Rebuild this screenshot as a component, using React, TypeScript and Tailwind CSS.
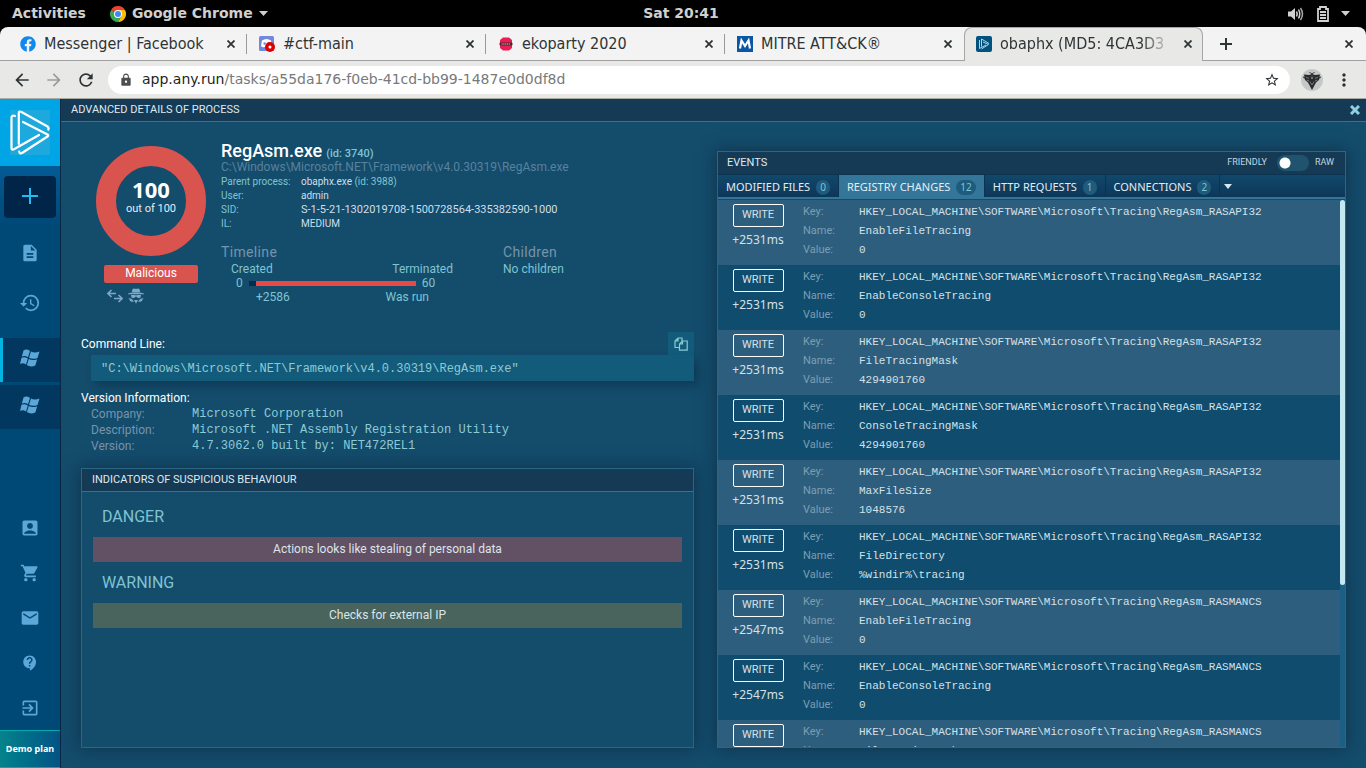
import { ReactNode } from "react";
import {
  MdDescription,
  MdHistory,
  MdAccountBox,
  MdShoppingCart,
  MdEmail,
  MdContactSupport,
  MdExitToApp,
  MdArrowBack,
  MdArrowForward,
  MdRefresh,
  MdLock,
  MdStarBorder,
  MdMoreVert,
} from "react-icons/md";
import { FaFacebook } from "react-icons/fa";

const RASAPI = "HKEY_LOCAL_MACHINE\\SOFTWARE\\Microsoft\\Tracing\\RegAsm_RASAPI32";
const RASMAN = "HKEY_LOCAL_MACHINE\\SOFTWARE\\Microsoft\\Tracing\\RegAsm_RASMANCS";

const events = [
  { time: "+2531ms", key: RASAPI, name: "EnableFileTracing", value: "0" },
  { time: "+2531ms", key: RASAPI, name: "EnableConsoleTracing", value: "0" },
  { time: "+2531ms", key: RASAPI, name: "FileTracingMask", value: "4294901760" },
  { time: "+2531ms", key: RASAPI, name: "ConsoleTracingMask", value: "4294901760" },
  { time: "+2531ms", key: RASAPI, name: "MaxFileSize", value: "1048576" },
  { time: "+2531ms", key: RASAPI, name: "FileDirectory", value: "%windir%\\tracing" },
  { time: "+2547ms", key: RASMAN, name: "EnableFileTracing", value: "0" },
  { time: "+2547ms", key: RASMAN, name: "EnableConsoleTracing", value: "0" },
  { time: "+2547ms", key: RASMAN, name: "FileTracingMask", value: "4294901760" },
];

function ChromeLogo() {
  return (
    <svg className="size-4" viewBox="0 0 48 48" aria-hidden="true">
      <path d="M24 24 3.2 12A24 24 0 0 1 44.8 12Z" fill="#ea4335" />
      <path d="M24 24 3.2 12A24 24 0 0 0 24 48L34.4 30Z" fill="#34a853" />
      <path d="M24 24 34.4 30 24 48A24 24 0 0 0 44.8 12H24Z" fill="#fbbc05" />
      <circle cx="24" cy="24" r="12" fill="#fff" />
      <circle cx="24" cy="24" r="9" fill="#4285f4" />
    </svg>
  );
}

function DiscordLogo() {
  return (
    <svg className="size-4" viewBox="0 0 16 16" aria-hidden="true">
      <rect width="15" height="15" rx="1.5" fill="#7289da" />
      <path d="M3 4.5Q7.500 1.500 12 4.500L13 10Q11 12 9.500 11L5.500 11Q4 12 2 10Z" fill="#fff" />
      <circle cx="5.600" cy="7.500" r="1.200" fill="#7289da" />
      <circle cx="9.400" cy="7.500" r="1.200" fill="#7289da" />
      <circle cx="11" cy="11" r="5" fill="#dc0000" />
      <circle cx="11" cy="11" r="1.500" fill="#fff" />
    </svg>
  );
}

function EkoLogo() {
  return (
    <svg className="size-4" viewBox="0 0 16 16" aria-hidden="true">
      <path d="M5 1.500H11L14 4V12L11 14.500H5L2 12V4Z" fill="#ec1c54" />
      <rect x="1.500" y="6.500" width="13" height="3" rx="1" fill="#4b2733" />
      <path d="M3.500 8H12.500" stroke="#e6b8c4" strokeDasharray="1.200 .6" />
    </svg>
  );
}

function MitreLogo() {
  return (
    <svg className="size-4" viewBox="0 0 16 16" aria-hidden="true">
      <rect width="16" height="16" fill="#0a57a4" />
      <path d="M3 12.500 4.500 4.500 8 10 11.500 4.500 13 12.500" fill="none" stroke="#fff" strokeWidth="2.200" />
    </svg>
  );
}

function RunGlyph({ className }: { className: string }) {
  return (
    <svg className={className} viewBox="0 0 40 45" fill="none" stroke="#fff" strokeWidth="2.2" strokeLinecap="round" strokeLinejoin="round" aria-hidden="true">
      <path d="M5 6Q1.500 4.800 1.500 8V38Q1.500 40.500 4 39.300L29 25" />
      <path d="M8.800 34V3Q8.800 .6 11.500 2L37.500 16.500Q39.200 17.500 38.300 19.500" />
      <path d="M13 12 37.500 24.500Q39 25.500 37.500 26.500L12 43Q9.500 44.200 9.200 41.500" />
    </svg>
  );
}

function RunFavicon() {
  return (
    <span className="flex size-4 shrink-0 items-center justify-center rounded-xs bg-[#02527f]">
      <svg className="h-3 w-3" viewBox="0 0 12 12" fill="none" stroke="#bfe3f2" aria-hidden="true">
        <path d="M1.500 2V10.500L8 7M3.500 1 11 5.500M3.500 1V8.500M5 4 10.500 6.500 3.500 11" strokeWidth=".9" />
      </svg>
    </span>
  );
}

function Avatar() {
  return (
    <svg className="size-[22px]" viewBox="0 0 22 22" aria-hidden="true">
      <circle cx="11" cy="11" r="11" fill="#c6c8c8" />
      <path d="M8.500 3Q11 6.500 13.500 3" fill="none" stroke="#333" />
      <path d="M3 5.500 8 6 11 5 14 6 19 5.500 18 11 15 13.500 11 21 7 13.500 4 11Z" fill="#292b2c" />
      <path d="M2 8Q4 8 5 11M20 8Q18 8 17 11" fill="none" stroke="#292b2c" />
      <path d="M5 8 8 9.500M17 8 14 9.500M9 12.500 11 16 13 12.500M5.500 11 8 12M16.500 11 14 12M10 7.500 11 10 12 7.500" fill="none" stroke="#9a9d9e" strokeWidth=".7" />
    </svg>
  );
}

function Cross() {
  return (
    <svg className="size-2" viewBox="0 0 8 8" stroke="currentColor" strokeWidth="1.8" aria-hidden="true">
      <path d="M.5 .5 7.500 7.500M7.500 .5 .5 7.500" />
    </svg>
  );
}

function Tab({ icon, title, active = false, divider = false }: { icon: ReactNode; title: string; active?: boolean; divider?: boolean }) {
  return (
    <div
      className={
        active
          ? "flex w-[239px] items-center rounded-t-lg border border-b-0 border-[#a5a5a5] bg-[#e8e8e7] pb-px pl-[11px] pr-[6px]"
          : "flex w-[239px] items-center border-b border-[#a0a0a0] pl-3"
      }
    >
      <span className="shrink-0">{icon}</span>
      <span
        className={
          active
            ? "ml-2 flex-1 overflow-hidden whitespace-nowrap [mask-image:linear-gradient(to_right,black_82%,transparent)]"
            : "ml-2 flex-1 overflow-hidden whitespace-nowrap"
        }
      >
        {title}
      </span>
      <button className="ml-2 flex size-4 items-center justify-center" aria-label={"Close " + title}>
        <Cross />
      </button>
      {!active && <span className={divider ? "ml-[7px] h-5 w-px bg-[#999]" : "ml-[7px] h-5 w-px"} />}
    </div>
  );
}

function SideButton({ label, children }: { label: string; children: ReactNode }) {
  return (
    <button aria-label={label} className="flex h-[45px] w-full items-center justify-center text-[#5ba7d7]">
      {children}
    </button>
  );
}

function EventTab({ label, count, active = false }: { label: string; count: number; active?: boolean }) {
  return (
    <button
      role="tab"
      aria-selected={active}
      className={
        active
          ? "flex items-center gap-[6px] whitespace-nowrap border-r border-[#0c3450] bg-[#347699] px-2 pt-[2px]"
          : "flex items-center gap-[6px] whitespace-nowrap border-r border-[#0c3450] px-2 pt-[2px]"
      }
    >
      {label}
      <span className="rounded-full bg-[#1e5b7c] px-1 text-[10px] leading-[15px] text-[#7fc4d6]">{count}</span>
    </button>
  );
}

function Fact({ label, children }: { label: string; children: ReactNode }) {
  return (
    <div className="flex">
      <dt className="w-20 text-[#7fc4d0]">{label}</dt>
      <dd className="text-[#cfdfe8]">{children}</dd>
    </div>
  );
}

function Version({ label, children }: { label: string; children: ReactNode }) {
  return (
    <div className="flex h-4 items-center">
      <dt className="w-[101px] font-[Roboto,sans-serif] text-[#7694aa]">{label}</dt>
      <dd className="font-['Liberation_Mono',monospace] text-[#8ccbd5]">{children}</dd>
    </div>
  );
}

export default function App() {
  return (
    <div className="flex h-screen min-h-0 flex-col overflow-hidden bg-black font-[Roboto,sans-serif]">
      <header className="grid h-[27px] shrink-0 grid-cols-[1fr_auto_1fr] items-center pl-3 pr-4 font-['DejaVu_Sans',sans-serif] text-[14px] font-bold text-[#d0d0d0]">
        <div className="flex items-center gap-6">
          <button>Activities</button>
          <button className="flex items-center gap-[6px]">
            <ChromeLogo />
            Google Chrome
            <svg className="h-[5px] w-[9px]" viewBox="0 0 9 5" aria-hidden="true">
              <path d="M0 0H9L4.500 5Z" fill="currentColor" />
            </svg>
          </button>
        </div>
        <time>Sat 20:41</time>
        <div className="flex items-center justify-end gap-3">
          <svg className="h-4 w-[18px]" viewBox="0 0 18 16" fill="none" stroke="currentColor" aria-hidden="true">
            <path d="M1 5.500H4L8 2V14L4 10.500H1Z" fill="currentColor" stroke="none" />
            <path d="M9.500 5.500Q11 8 9.500 10.500" strokeWidth="1.500" />
            <path d="M11.500 3.500Q14 8 11.500 12.500" strokeWidth="1.500" />
            <path d="M13.500 2Q17.500 8 13.500 14" strokeWidth="1.500" opacity=".8" />
          </svg>
          <svg className="h-4 w-3" viewBox="0 0 12 16" fill="none" stroke="currentColor" strokeWidth="1.800" aria-hidden="true">
            <path d="M1 3H3V1H9V3H11V15H1ZM3 6H9M3 9H9M3 12H9" />
          </svg>
          <svg className="h-[5px] w-[9px]" viewBox="0 0 9 5" aria-hidden="true">
            <path d="M0 0H9L4.500 5Z" fill="currentColor" />
          </svg>
        </div>
      </header>

      <nav aria-label="Browser tabs" className="flex h-[34px] shrink-0 rounded-t-lg bg-[#f3f3f3] font-['DejaVu_Sans_Condensed','Noto_Sans',sans-serif] text-[16px] leading-5 text-[#2e3436]">
        <div className="w-2 border-b border-[#a0a0a0]" />
        <Tab icon={<FaFacebook className="size-4 text-[#1089ef]" />} title="Messenger | Facebook" divider />
        <Tab icon={<DiscordLogo />} title="#ctf-main" divider />
        <Tab icon={<EkoLogo />} title="ekoparty 2020" divider />
        <Tab icon={<MitreLogo />} title="MITRE ATT&CK®" />
        <Tab icon={<RunFavicon />} title="obaphx (MD5: 4CA3D3" active />
        <div className="flex flex-1 items-center justify-between border-b border-[#a0a0a0] pl-[17px] pr-[13px]">
          <button aria-label="New tab">
            <svg className="size-3" viewBox="0 0 12 12" stroke="currentColor" strokeWidth="2" aria-hidden="true"><path d="M6 0V12M0 6H12" /></svg>
          </button>
          <button aria-label="Close window">
            <Cross />
          </button>
        </div>
      </nav>

      <div className="flex h-[38px] shrink-0 items-center border-b border-[#a8aaa2] bg-[#e8e8e7] px-3 text-[#2e3436]">
        <button aria-label="Back"><MdArrowBack className="size-5" /></button>
        <button aria-label="Forward" className="ml-3 text-[#9a9c9c]"><MdArrowForward className="size-5" /></button>
        <button aria-label="Reload" className="ml-3"><MdRefresh className="size-5" /></button>
        <div className="ml-3 flex h-7 flex-1 items-center rounded-full bg-white pl-[11px] pr-[10px]">
          <MdLock className="size-[14px] text-[#4c4f50]" />
          <div className="ml-[9px] flex-1 font-['DejaVu_Sans',sans-serif] text-[14px] text-[#77797a]">
            <a href="#address" className="whitespace-nowrap"><span className="text-[#1c1f20]">app.any.run</span>/tasks/a55da176-f0eb-41cd-bb99-1487e0d0df8d</a>
          </div>
          <button aria-label="Bookmark this page"><MdStarBorder className="size-4" /></button>
        </div>
        <button aria-label="Profile" className="ml-[11px]"><Avatar /></button>
        <button aria-label="Menu" className="ml-[11px]"><MdMoreVert className="size-5" /></button>
      </div>

      <div className="flex min-h-0 flex-1 bg-[#144c6c]">
        <aside className="flex w-[61px] shrink-0 flex-col border-r border-[#0a2844] bg-[#004876]">
          <a href="#home" aria-label="ANY.RUN home" className="flex h-[67px] shrink-0 items-center justify-center bg-[#00a5e6]">
            <span className="bg-[#1ea9de]"><RunGlyph className="h-[45px] w-10" /></span>
          </a>
          <div className="h-[62px] shrink-0 bg-linear-to-b from-[#035b94] to-[#004876] px-1 pt-[10px]">
            <button aria-label="New task" className="flex h-[42px] w-full items-center justify-center rounded bg-[#012548] pb-[2px] text-[#20bdf5]">
              <svg className="size-4" viewBox="0 0 16 16" stroke="currentColor" strokeWidth="2" aria-hidden="true"><path d="M8 0V16M0 8H16" /></svg>
            </button>
          </div>
          <button aria-label="Reports" className="flex h-[50px] shrink-0 items-center justify-center text-[#5ba7d7]"><MdDescription className="size-5" /></button>
          <button aria-label="History" className="flex h-[50px] shrink-0 items-center justify-center text-[#5ba7d7]"><MdHistory className="size-[22px]" /></button>
          <button aria-label="Windows task 1" className="mt-[10px] flex h-11 shrink-0 items-center justify-center border-l-3 border-[#00b5e2] bg-[#02375f] pb-1 pr-[3px] text-[#5ba7d7]">
            <WindowsFlag />
          </button>
          <button aria-label="Windows task 2" className="mt-[3px] flex h-11 shrink-0 items-center justify-center bg-[#02375f] pb-1 text-[#5ba7d7]">
            <WindowsFlag />
          </button>
          <div className="mt-auto shrink-0">
            <SideButton label="Profile page"><MdAccountBox className="size-5" /></SideButton>
            <SideButton label="Pricing"><MdShoppingCart className="size-5" /></SideButton>
            <SideButton label="Contacts"><MdEmail className="size-5" /></SideButton>
            <SideButton label="Help"><MdContactSupport className="size-[18px]" /></SideButton>
            <SideButton label="Sign out"><MdExitToApp className="size-5" /></SideButton>
            <a href="#plan" className="flex h-[38px] items-center justify-center border-y border-[#03a9ad] bg-linear-to-r from-[#05838c] to-[#045384] font-['Noto_Sans',sans-serif] text-[9px] font-bold text-white">
              Demo plan
            </a>
          </div>
        </aside>

        <div className="flex min-w-0 flex-1 flex-col">
          <div className="flex h-[23px] shrink-0 items-center justify-between border-b border-[#2a7699] bg-[#143a56] pl-[10px] pr-[6px] text-[11px] text-[#dfe9ef]">
            <h1>ADVANCED DETAILS OF PROCESS</h1>
            <button aria-label="Close details" className="text-[#8fd0e0]">
              <svg className="size-[10px]" viewBox="0 0 10 10" stroke="currentColor" strokeWidth="3" aria-hidden="true"><path d="M1 1 9 9M9 1 1 9" /></svg>
            </button>
          </div>

          <main className="flex min-h-0 flex-1 gap-[23px] px-5 pb-5">
            <section className="flex min-w-0 flex-1 flex-col">
              <div className="flex pl-[15px] pt-[18px]">
                <div className="flex w-[110px] flex-col items-center pt-[6px]">
                  <div className="flex size-[110px] flex-col items-center justify-center rounded-full border-[20px] border-[#d9534f] pb-1">
                    <strong className="font-['Noto_Sans',sans-serif] text-[22px] leading-5 text-white">100</strong>
                    <span className="text-[11px] leading-5 text-[#e5edf2]">out of 100</span>
                  </div>
                  <div className="mt-[9px] flex h-[18px] w-[94px] items-center justify-center rounded-xs bg-[#d9534f] pb-[2px] text-[12px] text-white">Malicious</div>
                  <div className="mt-[5px] flex w-[88px] items-center gap-[5px] text-[#7fa8c4]">
                    <svg className="h-[14px] w-4" viewBox="0 0 16 14" fill="none" stroke="currentColor" strokeWidth="1.600" aria-hidden="true">
                      <path d="M4.500 1 1 4.500 4.500 8M1 4.500H9M11.500 6 15 9.500 11.500 13M15 9.500H7" />
                    </svg>
                    <SpyIcon />
                  </div>
                </div>

                <div className="ml-[15px] min-w-0 flex-1">
                  <h2 className="flex h-5 items-baseline gap-1 whitespace-nowrap text-[18px] leading-[22px] font-medium text-white">
                    RegAsm.exe <span className="text-[11px] font-medium text-[#7fc4d0]">(id: 3740)</span>
                  </h2>
                  <p className="text-[12px] leading-[15px] text-[#58829d]">C:\Windows\Microsoft.NET\Framework\v4.0.30319\RegAsm.exe</p>
                  <dl className="text-[10px] leading-[14px]">
                    <Fact label="Parent process:">obaphx.exe <span className="text-[#7fc4d0]">(id: 3988)</span></Fact>
                    <Fact label="User:">admin</Fact>
                    <Fact label="SID:"><span className="text-[11px]">S-1-5-21-1302019708-1500728564-335382590-1000</span></Fact>
                    <Fact label="IL:">MEDIUM</Fact>
                  </dl>
                  <div className="mt-[13px] flex text-[12px] leading-[14px] text-[#7fc4d0]">
                    <div className="w-[282px]">
                      <h3 className="pb-[2px] text-[14px] leading-4 tracking-wide text-[#7694aa]">Timeline</h3>
                      <div className="flex w-[232px] justify-between pl-[10px]"><span>Created</span><span>Terminated</span></div>
                      <div className="flex items-center pl-[15px]">
                        <span>0</span>
                        <div className="ml-[6px] mr-[6px] flex h-[5px] w-[167px] bg-[#e74a45]"><div className="w-[7px] bg-[#062d50]" /></div>
                        <span>60</span>
                      </div>
                      <div className="flex w-[208px] justify-between pl-[35px]"><span>+2586</span><span>Was run</span></div>
                    </div>
                    <div>
                      <h3 className="pb-[2px] text-[14px] leading-4 tracking-wide text-[#7694aa]">Children</h3>
                      <p>No children</p>
                    </div>
                  </div>
                </div>
              </div>

              <div className="mt-7 flex h-[23px] items-center justify-between">
                <h3 className="text-[12px] text-white">Command Line:</h3>
                <button aria-label="Copy command line" className="flex h-[23px] w-[26px] items-center justify-center bg-[#135b7b] text-[#8ccbd5]"><CopyIcon /></button>
              </div>
              <div className="ml-[10px] flex h-[26px] items-center bg-[#135b7b] pl-[10px] pt-[2px] font-['Liberation_Mono',monospace] text-[12px] text-[#8ccbd5] shadow-[4px_5px_8px_rgba(10,40,62,0.45)]">
                "C:\Windows\Microsoft.NET\Framework\v4.0.30319\RegAsm.exe"
              </div>
              <h3 className="mt-[9px] text-[12px] leading-4 text-white">Version Information:</h3>
              <dl className="pl-[10px] text-[12px]">
                <Version label="Company:">Microsoft Corporation</Version>
                <Version label="Description:">Microsoft .NET Assembly Registration Utility</Version>
                <Version label="Version:">4.7.3062.0 built by: NET472REL1</Version>
              </dl>

              <section className="mt-[14px] flex min-h-0 flex-1 flex-col border border-[#286887] bg-[#144c6c] shadow-[0_0_16px_rgba(10,35,52,0.65)]">
                <h3 className="flex h-[23px] shrink-0 items-center border-b border-[#2a7699] bg-[#143a56] px-[10px] text-[11px] text-[#dfe9ef]">INDICATORS OF SUSPICIOUS BEHAVIOUR</h3>
                <div className="px-[11px] text-center text-[12px] text-[#dbe5ea]">
                  <h4 className="mt-[15px] pl-[9px] text-left text-[16px] leading-5 text-[#7fc4d0]">DANGER</h4>
                  <p className="mt-[10px] h-[25px] bg-[#625064] leading-6">Actions looks like stealing of personal data</p>
                  <h4 className="mt-[11px] pl-[9px] text-left text-[16px] leading-5 text-[#7fc4d0]">WARNING</h4>
                  <p className="mt-[10px] h-[25px] bg-[#49635d] leading-6">Checks for external IP</p>
                </div>
              </section>
            </section>

            <section className="mt-[29px] flex min-w-0 flex-[0_0_629px] flex-col border border-[#286887] bg-[#104c6d] shadow-[0_0_16px_rgba(10,35,52,0.65)]">
              <div className="flex h-[22px] shrink-0 items-center justify-between bg-[#143a56] px-[9px] text-[11px] text-[#dfe9ef]">
                <h2>EVENTS</h2>
                <label className="flex items-center gap-[10px] pr-[2px] text-[9px] text-[#c4d5df]">
                  FRIENDLY
                  <input type="checkbox" role="switch" className="h-4 w-8 appearance-none rounded-full bg-[#20546e] bg-[radial-gradient(circle_at_8px_8px,white_5px,transparent_6px)]" />
                  <span className="-ml-1">RAW</span>
                </label>
              </div>
              <div role="tablist" className="mb-px flex h-[25px] shrink-0 border-t border-b-2 border-t-[#0c3450] border-b-[#347699] bg-linear-to-b from-[#11486b] to-[#0d3759] font-['Noto_Sans',sans-serif] text-[11px] text-[#e3edf2]">
                <EventTab label="MODIFIED FILES" count={0} />
                <EventTab label="REGISTRY CHANGES" count={12} active />
                <EventTab label="HTTP REQUESTS" count={1} />
                <EventTab label="CONNECTIONS" count={2} />
                <button aria-label="More event tabs" className="px-1">
                  <svg className="h-[5px] w-2" viewBox="0 0 8 5" aria-hidden="true"><path d="M0 0H8L4 5Z" fill="#d5e8f0" /></svg>
                </button>
              </div>
              <div className="flex min-h-0 flex-1 overflow-hidden">
                <div className="min-w-0 flex-1">
                  {events.map((e, i) => (
                    <article key={i} className={i % 2 === 0 ? "flex h-[65px] bg-[#2e5e7d] text-[11px]" : "flex h-[65px] text-[11px]"}>
                      <div className="flex w-20 flex-col items-center pt-1 text-[#d5e1e8]">
                        <span className="flex h-[23px] w-[51px] items-center justify-center rounded-xs border border-white">WRITE</span>
                        <span className="mt-1 font-['Noto_Sans',sans-serif] text-[12px] leading-[18px]">{e.time}</span>
                      </div>
                      <dl className="grid auto-rows-[19px] grid-cols-[56px_1fr] items-center pl-[5px] pt-[3px]">
                        <dt className="text-[#7b9eb4]">Key:</dt>
                        <dd className="font-['Liberation_Mono',monospace] text-[#d5e1e8]">{e.key}</dd>
                        <dt className="text-[#7b9eb4]">Name:</dt>
                        <dd className="font-['Liberation_Mono',monospace] text-[#d5e1e8]">{e.name}</dd>
                        <dt className="text-[#7b9eb4]">Value:</dt>
                        <dd className="font-['Liberation_Mono',monospace] text-[#d5e1e8]">{e.value}</dd>
                      </dl>
                    </article>
                  ))}
                </div>
                <div className="w-[5px] bg-[#1b6084]">
                  <div className="h-[385px] rounded-full bg-[#c4e8f2]" />
                </div>
              </div>
            </section>
          </main>
        </div>
      </div>
    </div>
  );
}

function WindowsFlag() {
  return (
    <svg className="h-[18px] w-5" viewBox="0 0 20 18" fill="currentColor" aria-hidden="true">
      <path d="M3.500 1.500Q6.500 -.5 10 2L8 8.200Q5 6 1.800 7.500Z" />
      <path d="M11 2.500Q14.500 4.500 19.500 2.500L17.500 9Q12.500 10.800 9 8.800Z" />
      <path d="M1.500 8.800Q4.500 7.200 7.800 9.500L6 15.500Q3 13.500 0 15Z" />
      <path d="M8.800 10Q12.500 12 17.200 10.200L15.300 16.500Q10.500 18.500 6.900 16Z" />
    </svg>
  );
}

function CopyIcon() {
  return (
    <svg className="size-[14px]" viewBox="0 0 14 14" fill="none" stroke="currentColor" strokeWidth="1.200" aria-hidden="true">
      <path d="M5 10.500H1V4L4 1H8V4M4 1V4H1" />
      <path d="M5.500 13.200V7L8.500 4H13.200V13.200ZM8.500 4V7H5.500" />
    </svg>
  );
}

function SpyIcon() {
  return (
    <svg className="size-4" viewBox="0 0 16 16" fill="currentColor" aria-hidden="true">
      <path d="M4.500 1Q6 0 8 1 10 0 11.500 1L12.200 4H3.800Z" />
      <path d="M0 5.500Q8 3.200 16 5.500V6.200H0Z" />
      <path d="M3 7H7L8 7.600 9 7H13L12.500 9.500Q10 11 8.500 8.800H7.500Q6 11 3.500 9.500Z" />
      <path d="M.5 10 4 11 6 14 2.500 13.500ZM15.500 10 12 11 10 14 13.500 13.500ZM6 12H10L8 15.800Z" />
    </svg>
  );
}
